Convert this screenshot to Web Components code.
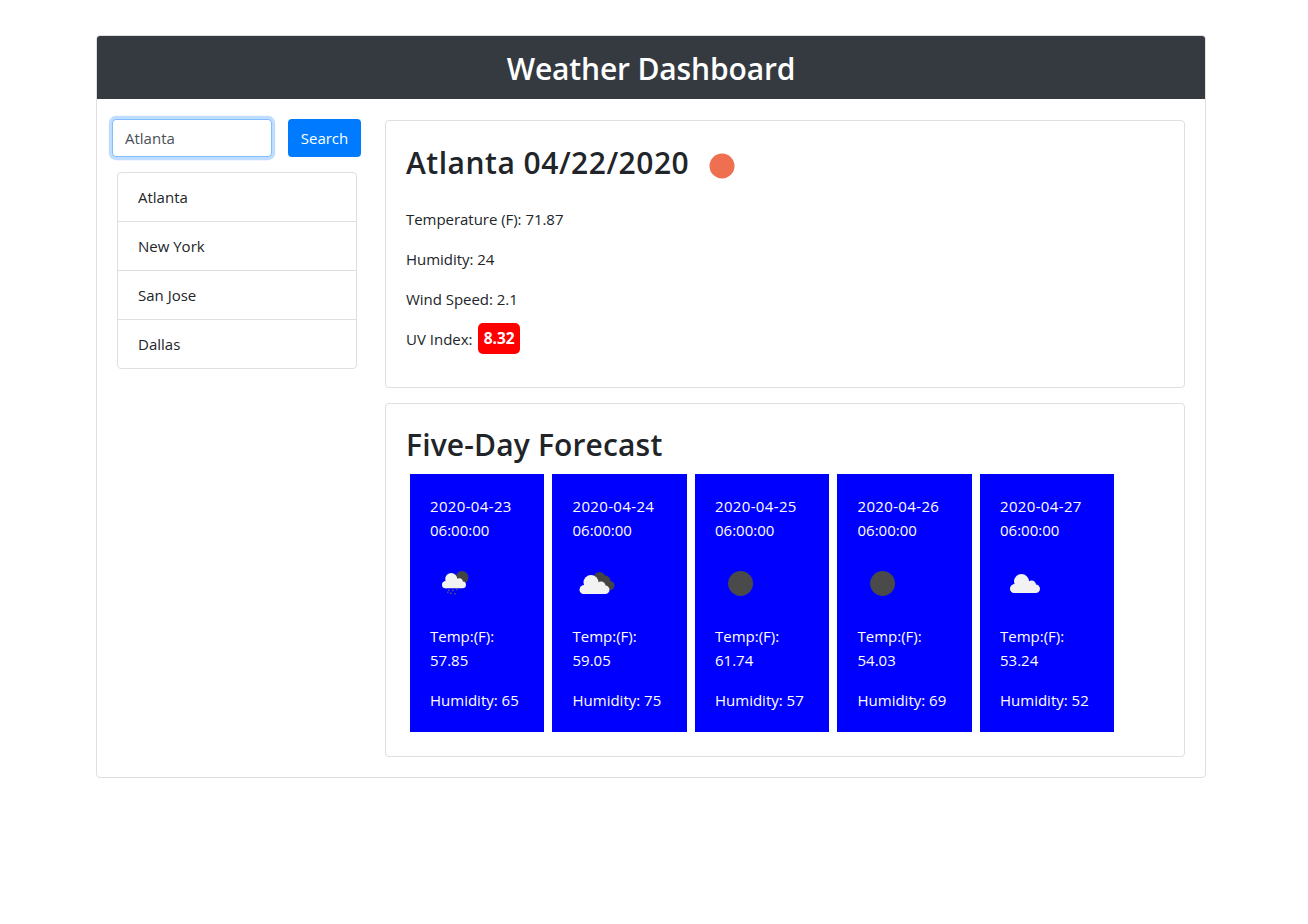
<!DOCTYPE html>
<html><head><meta charset="utf-8"><style>
html,body{margin:0;background:#fff}
body{padding:35px 102px 0 96px;font:15px/24px "Open Sans","Noto Sans",sans-serif;color:#212529;height:889px}
</style></head><body>
<weather-app>
  <search-panel slot="side">
    <city-item>Atlanta</city-item><city-item>New York</city-item><city-item>San Jose</city-item><city-item>Dallas</city-item>
  </search-panel>
  <current-card slot="main" city="Atlanta 04/22/2020"></current-card>
  <forecast-panel slot="main">
    <day-card date="2020-04-23" temp="57.85" hum="65" icon="rain"></day-card>
    <day-card date="2020-04-24" temp="59.05" hum="75" icon="cloudy"></day-card>
    <day-card date="2020-04-25" temp="61.74" hum="57" icon="dark"></day-card>
    <day-card date="2020-04-26" temp="54.03" hum="69" icon="dark"></day-card>
    <day-card date="2020-04-27" temp="53.24" hum="52" icon="cloud"></day-card>
  </forecast-panel>
</weather-app>
<script>
const cloud=(x,y,s)=>`<g transform="translate(${x} ${y}) scale(${s})" fill="#f2f2f2"><circle cx="11.5" cy="7.5" r="7.5"/><circle cx="21.5" cy="11" r="4.5"/><circle cx="5" cy="14.5" r="4.5"/><rect x="0" y="10.5" width="30" height="8.5" rx="4.25"/></g>`;
const icons={
 rain:`<circle cx="32" cy="19.5" r="6.5" fill="#444"/>${cloud(12,15,.8)}<g fill="#50507a"><rect x="18" y="31.5" width="1.6" height="1.6"/><rect x="22" y="31.5" width="1.6" height="1.6"/><rect x="26" y="30.5" width="1.6" height="1.6"/><rect x="20" y="34.5" width="1.6" height="1.6"/><rect x="24" y="35" width="1.6" height="1.6"/><rect x="17" y="33.5" width="1.6" height="1.6"/></g>`,
 cloudy:`<circle cx="27.5" cy="20" r="6" fill="#444"/><circle cx="33" cy="23" r="5.5" fill="#444"/><circle cx="38" cy="27.5" r="4.5" fill="#444"/>${cloud(7.5,17,1)}`,
 dark:`<circle cx="25.6" cy="25.5" r="12.5" fill="#4a4a4a"/>`,
 cloud:cloud(10,16,1)
};
function def(name,html){customElements.define(name,class extends HTMLElement{connectedCallback(){if(this.shadowRoot)return;this.attachShadow({mode:"open"}).innerHTML=html(this)}})}
def("weather-app",()=>`<style>
:host{display:block;width:1110px;height:743px;box-sizing:border-box;border:1px solid #dfdfdf;border-radius:4px}
header{height:63px;background:#343a40;border-radius:3px 3px 0 0;color:#fff;text-align:center;font-size:30px;line-height:65px;font-weight:600;letter-spacing:-.15px}
.b{display:flex;padding:21px 20px 20px 15px;gap:24px}
.s{width:249px;flex:none}.m{display:flex;flex-direction:column;gap:15px;width:800px}
</style><header>Weather Dashboard</header><div class="b"><div class="s"><slot name="side"></slot></div><div class="m"><slot name="main"></slot></div></div>`);
def("search-panel",()=>`<style>
:host{display:block;margin-top:-1px}
.f{display:flex;gap:16px;height:38px}
.i{box-sizing:border-box;width:160px;height:38px;border:1px solid #80bdff;border-radius:4px;box-shadow:0 0 0 3.2px rgba(0,123,255,.25);padding:6px 12px;color:#495057;background:#fff}
.btn{width:73px;height:38px;background:#007bff;color:#fff;border-radius:4px;text-align:center;line-height:38px}
ul{margin:15px 0 0 5px;padding:0;width:240px;box-sizing:border-box;border:1px solid #dfdfdf;border-radius:4px;display:block}
</style><div class="f"><div class="i">Atlanta</div><div class="btn">Search</div></div><ul><slot></slot></ul>`);
def("city-item",()=>`<style>
:host{display:block;height:49px;box-sizing:border-box;padding:12px 20px;border-bottom:1px solid #dfdfdf}
:host(:last-child){border-bottom:0;height:48px}
</style><slot></slot>`);
def("current-card",h=>`<style>
:host{display:block;box-sizing:border-box;height:268px;border:1px solid #dfdfdf;border-radius:4px;padding:20px}
h2{margin:0 0 16px;height:50px;display:flex;font-size:30px;line-height:44px;font-weight:600;letter-spacing:.5px}
svg{margin-left:8px;display:block}
p{margin:0 0 16px;height:24px;letter-spacing:-.04px}
p.u{display:flex;align-items:center;gap:5.6px;letter-spacing:0}
.uv{display:block;background:red;color:#fff;font-weight:700;border-radius:5px;padding:0 5.5px;height:31px;line-height:31px;font-size:15.5px;margin-top:-1px}
</style><h2>${h.getAttribute("city")}<svg width="50" height="50" viewBox="0 0 50 50"><circle cx="25" cy="25" r="12.5" fill="#ee7050"/></svg></h2>
<p>Temperature (F): 71.87</p><p>Humidity: 24</p><p>Wind Speed: 2.1</p><p class="u">UV Index: <span class="uv">8.32</span></p>`);
def("forecast-panel",()=>`<style>
:host{display:block;box-sizing:border-box;height:354px;border:1px solid #dfdfdf;border-radius:4px;padding:20px 20px 24px 23.6px}
h2{margin:0 0 10px -3.6px;font-size:30px;line-height:41px;font-weight:600;letter-spacing:.15px;height:40px}
.g{display:flex;gap:8px}
</style><h2>Five-Day Forecast</h2><div class="g"><slot></slot></div>`);
def("day-card",h=>`<style>
:host{display:block;box-sizing:border-box;width:134.5px;height:258px;background:#00f;color:#fff;padding:20px 19.6px 20px 20.4px}
p{margin:0 0 16px}svg{display:block;margin:0 0 16px -.4px}
span{letter-spacing:.35px}
</style><p><span>${h.getAttribute("date")}</span> 06:00:00</p><svg width="50" height="50" viewBox="0 0 50 50">${icons[h.getAttribute("icon")]}</svg><p>Temp:(F): ${h.getAttribute("temp")}</p><p style="margin:0;white-space:nowrap">Humidity: ${h.getAttribute("hum")}</p>`);
</script>
</body></html>
